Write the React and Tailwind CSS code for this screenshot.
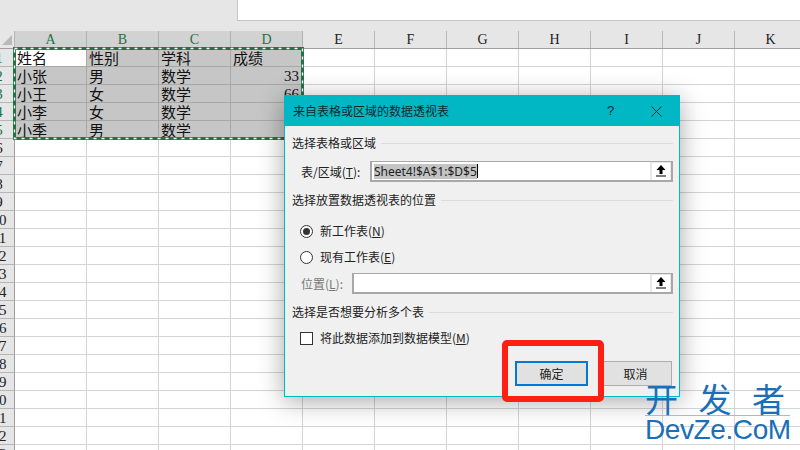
import React from "react";

const cjk = "font-['Noto_Sans_CJK_SC','Noto_Sans',sans-serif]";
const columns = ["A", "B", "C", "D", "E", "F", "G", "H", "I", "J", "K"];
const rows = Array.from({ length: 23 }, (_, i) => i + 1);
const data = [
  ["姓名", "性别", "学科", "成绩"],
  ["小张", "男", "数学", "33"],
  ["小王", "女", "数学", "66"],
  ["小李", "女", "数学", ""],
  ["小季", "男", "数学", ""],
];

const UploadIcon = () => (
  <div className="w-[18px] h-[17px] bg-white flex items-center justify-center shrink-0">
    <svg width="10" height="12" viewBox="0 0 10 12">
      <path d="M5 0 L9.5 5 H6.5 V9 H3.5 V5 H0.5 Z" fill="#000" />
      <rect x="0" y="10.5" width="10" height="1" fill="#000" />
    </svg>
  </div>
);

const RangeInput = ({ className, children }) => (
  <div className={`h-[21px] flex items-center bg-white border-2 border-[#a8a8a8] border-t-[1px] ${className}`}>
    <div className="flex-1 min-w-0 h-full flex items-center">{children}</div>
    <div className="h-full w-[21px] bg-[#e8e8e8] flex items-center justify-center shrink-0">
      <UploadIcon />
    </div>
  </div>
);

const SectionTitle = ({ children }) => (
  <div className="flex items-center gap-[5px] h-4">
    <span className="text-[12px] leading-4 text-[#222] whitespace-nowrap">{children}</span>
    <div className="flex-1 h-px bg-[#dcdcdc]" />
  </div>
);

const Radio = ({ checked, children }) => (
  <div className="flex items-center gap-[7px] h-4 pl-2">
    <div className="w-[13px] h-[13px] rounded-full border border-[#333] bg-white flex items-center justify-center">
      {checked && <div className="w-[7px] h-[7px] rounded-full bg-[#333]" />}
    </div>
    <span className="text-[12px] leading-4 text-[#222]">{children}</span>
  </div>
);

const PivotDialog = () => (
  <div className={`absolute left-[284px] top-[95px] w-[396px] h-[302px] bg-[#f0f0f0] border border-[#00b7c3] shadow-[0_4px_24px_rgba(0,0,0,0.35)] flex flex-col ${cjk}`}>
    <div className="h-[30px] bg-[#00b7c3] flex items-center pl-[8px] shrink-0">
      <span className="flex-1 text-[12px] text-[#10282c]">来自表格或区域的数据透视表</span>
      <span className="w-[26px] text-[13px] text-[#10282c] font-['Liberation_Sans',sans-serif]">?</span>
      <div className="w-[46px] flex justify-center">
        <svg width="11" height="11" viewBox="0 0 11 11">
          <path d="M0.5 0.5 L10.5 10.5 M10.5 0.5 L0.5 10.5" stroke="#10282c" strokeWidth="1" fill="none" />
        </svg>
      </div>
    </div>

    <div className="flex-1 flex flex-col px-[7px] pt-[9px] pr-[6px]">
      <SectionTitle>选择表格或区域</SectionTitle>

      <div className="flex items-center mt-[10px] pl-[9px]">
        <span className="w-[69px] text-[12px] text-[#222] whitespace-nowrap">
          表/区域(<span className="underline">T</span>):
        </span>
        <RangeInput className="flex-1">
          <span className="ml-[2px] bg-[#c4c4c4] text-[12px] leading-[15px] text-[#222] font-['Noto_Sans',sans-serif]">
            Sheet4!$A$1:$D$5
          </span>
          <span className="w-px h-[14px] bg-black" />
        </RangeInput>
      </div>

      <div className="mt-[10px]">
        <SectionTitle>选择放置数据透视表的位置</SectionTitle>
      </div>

      <div className="mt-[15px] flex flex-col gap-[10px]">
        <Radio checked>
          新工作表(<span className="underline">N</span>)
        </Radio>
        <Radio>
          现有工作表(<span className="underline">E</span>)
        </Radio>
      </div>

      <div className="flex items-center mt-[8px] pl-[9px]">
        <span className="w-[51px] text-[12px] text-[#777] whitespace-nowrap">
          位置(<span className="underline">L</span>):
        </span>
        <RangeInput className="flex-1" />
      </div>

      <div className="mt-[10px]">
        <SectionTitle>选择是否想要分析多个表</SectionTitle>
      </div>

      <div className="flex items-center gap-[7px] h-4 pl-2 mt-[10px]">
        <div className="w-[13px] h-[13px] border border-[#333] bg-white" />
        <span className="text-[12px] leading-4 text-[#222]">
          将此数据添加到数据模型(<span className="underline">M</span>)
        </span>
      </div>

      <div className="flex justify-end gap-[11px] mt-[15px] pr-[1px]">
        <button className="w-[73px] h-[25px] bg-[#e1e1e1] border-2 border-[#0078d7] text-[12px] text-[#222]">
          确定
        </button>
        <button className="w-[73px] h-[25px] bg-[#e1e1e1] border border-[#adadad] text-[12px] text-[#222]">
          取消
        </button>
      </div>
    </div>
  </div>
);

const App = () => {
  return (
    <div className={`relative w-[800px] h-[450px] overflow-hidden bg-white ${cjk}`}>
      {/* 编辑栏 */}
      <div className="h-[31px] bg-[#e6e6e6] flex justify-end">
        <div className="w-[563px] h-[21px] bg-white border-l border-b border-[#c6c6c6]" />
      </div>

      {/* 列标题 */}
      <div className="flex h-[18px] bg-[#e6e6e6] border-b border-[#9f9f9f] font-['Liberation_Serif',serif] text-[14px] leading-[18px]">
        <div className="w-[15px] shrink-0 flex items-end justify-end pr-[2px] pb-[3px] border-r border-[#b5b5b5]">
          <div className="w-0 h-0 border-l-[10px] border-l-transparent border-b-[10px] border-b-[#b9b9b9]" />
        </div>
        {columns.map((col, i) => (
          <div
            key={col}
            className={`w-[72px] shrink-0 text-center border-r ${
              i < 4
                ? "bg-[#d2d2d2] text-[#217346] border-[#b0b0b0]"
                : "text-[#222] border-[#b8b8b8]"
            }`}
          >
            {col}
          </div>
        ))}
      </div>

      {/* 单元格 */}
      {rows.map((row) => (
        <div key={row} className="flex h-[18px]">
          <div className="w-[15px] shrink-0 overflow-hidden bg-[#e6e6e6] border-r border-b border-r-[#9f9f9f] border-b-[#b5b5b5] font-['Liberation_Serif',serif] text-[15px] leading-[18px] text-[#222]">
            <div className={`w-[28px] -ml-[15px] text-center ${row <= 5 ? "text-[#217346]" : ""}`}>
              {row}
            </div>
          </div>
          {columns.map((col, c) => {
            const selected = row <= 5 && c < 4;
            const value = selected ? data[row - 1][c] : "";
            return (
              <div
                key={col}
                className={`w-[72px] shrink-0 h-[18px] overflow-hidden border-r border-b text-[15px] leading-[18px] text-[#111] px-[2px] ${
                  selected ? "border-[#a8a8a8]" : "border-[#d4d4d4]"
                } ${
                  selected && !(row === 1 && c === 0) ? "bg-[#c6c6c6]" : "bg-white"
                } ${
                  c === 3 && row > 1 ? "text-right font-['Liberation_Serif',serif] pr-[3px]" : ""
                }`}
              >
                {value}
              </div>
            );
          })}
        </div>
      ))}

      {/* 复制选区的虚线框 */}
      <svg className="absolute left-[13px] top-[47px]" width="292" height="93" viewBox="0 0 292 93">
        <rect x="1.5" y="1.5" width="288" height="90" fill="none" stroke="#217346" strokeWidth="3" />
        <rect x="1.5" y="1.5" width="288" height="90" fill="none" stroke="#fff" strokeWidth="1.4" strokeDasharray="3 5" />
      </svg>

      <PivotDialog />

      {/* 红色标注框 */}
      <div className="absolute left-[502px] top-[340px] w-[102px] h-[62px] border-[6px] border-[#ff2013] rounded-[5px]" />

      {/* 水印 */}
      <div className="absolute left-[645px] top-[381px] w-[145px] text-[#1a6fb8]">
        <div className="flex justify-between pr-[5px] text-[33px] leading-[34px] h-[34px]">
          <span>开</span>
          <span>发</span>
          <span>者</span>
        </div>
        <div className="h-px bg-[#8cc4e8]" />
        <div className="text-[28px] leading-[28px] tracking-[-0.4px] whitespace-nowrap font-['Liberation_Sans',sans-serif]">
          DevZe.CoM
        </div>
      </div>
    </div>
  );
};

export default App;
